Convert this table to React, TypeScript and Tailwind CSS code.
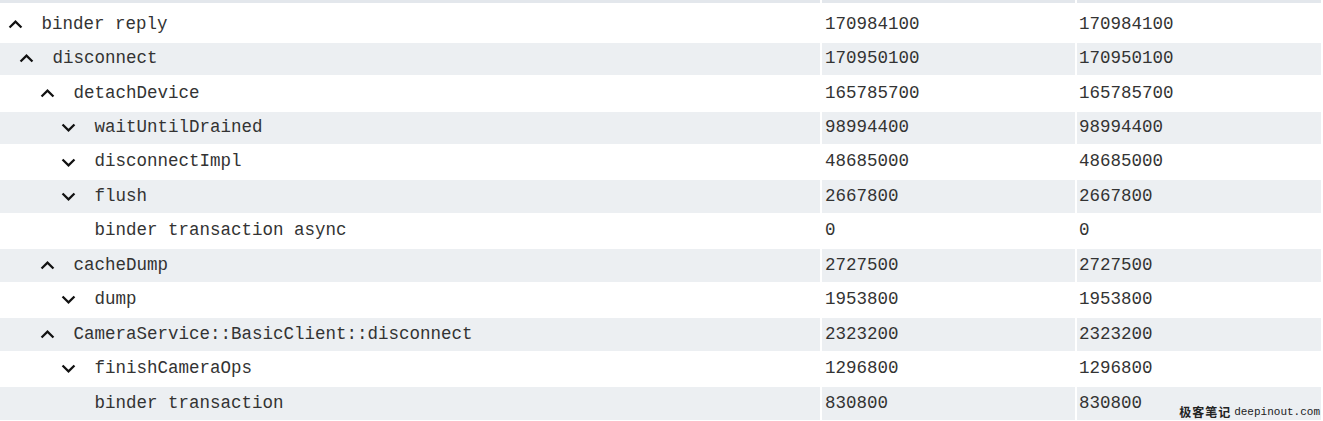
import React from "react";

type Row = {
    name: string;
    level: number;
    chevron: "up" | "down" | "none";
    wall: string;
    self: string;
};

const rows: Row[] = [
    { name: "binder reply", level: 0, chevron: "up", wall: "170984100", self: "170984100" },
    { name: "disconnect", level: 1, chevron: "up", wall: "170950100", self: "170950100" },
    { name: "detachDevice", level: 2, chevron: "up", wall: "165785700", self: "165785700" },
    { name: "waitUntilDrained", level: 3, chevron: "down", wall: "98994400", self: "98994400" },
    { name: "disconnectImpl", level: 3, chevron: "down", wall: "48685000", self: "48685000" },
    { name: "flush", level: 3, chevron: "down", wall: "2667800", self: "2667800" },
    { name: "binder transaction async", level: 3, chevron: "none", wall: "0", self: "0" },
    { name: "cacheDump", level: 2, chevron: "up", wall: "2727500", self: "2727500" },
    { name: "dump", level: 3, chevron: "down", wall: "1953800", self: "1953800" },
    { name: "CameraService::BasicClient::disconnect", level: 2, chevron: "up", wall: "2323200", self: "2323200" },
    { name: "finishCameraOps", level: 3, chevron: "down", wall: "1296800", self: "1296800" },
    { name: "binder transaction", level: 3, chevron: "none", wall: "830800", self: "830800" },
];

// left offset of the icon box for each depth
const indent = ["pl-[1.5px]", "pl-[12.5px]", "pl-[33.5px]", "pl-[54.5px]"];

function Chevron({ dir }: { dir: "up" | "down" | "none" }) {
    if (dir === "none") return <span className="w-[27px] h-[27px] shrink-0" />;
    return (
        <svg viewBox="0 0 24 24" className="w-[27px] h-[27px] shrink-0" fill="#111">
            {dir === "up" ? (
                <path d="M12 8l-6 6 1.41 1.41L12 10.83l4.59 4.58L18 14z" />
            ) : (
                <path d="M16.59 8.59L12 13.17 7.41 8.59 6 10l6 6 6-6z" />
            )}
        </svg>
    );
}

export default function App() {
    return (
        <div
            className="relative w-[1323px] h-[421px] overflow-hidden bg-white text-[#333] text-[17.5px]"
            style={{ fontFamily: '"Liberation Mono", "DejaVu Sans Mono", monospace' }}
        >
            <div className="grid grid-cols-[820px_253px_244px] gap-x-[2px] h-[3px]">
                <div className="bg-[#e3e7ec]" />
                <div className="bg-[#e3e7ec]" />
                <div className="bg-[#e3e7ec]" />
            </div>
            <div className="mt-[5.25px] grid grid-cols-[820px_253px_244px] gap-x-[2px] gap-y-[2px]">
                {rows.map((r, i) => {
                    const bg = i % 2 === 1 ? "bg-[#eceff2]" : "bg-white";
                    return (
                        <React.Fragment key={i}>
                            <div className={`${bg} h-[32.45px] flex items-center ${indent[r.level]}`}>
                                <Chevron dir={r.chevron} />
                                <span className="ml-[13px] whitespace-nowrap leading-none">{r.name}</span>
                            </div>
                            <div className={`${bg} h-[32.45px] flex items-center pl-[3px]`}>
                                <span className="leading-none">{r.wall}</span>
                            </div>
                            <div className={`${bg} h-[32.45px] flex items-center pl-[2px]`}>
                                <span className="leading-none">{r.self}</span>
                            </div>
                        </React.Fragment>
                    );
                })}
            </div>
            <div className="absolute right-[3px] bottom-[3px] flex items-end gap-[3px] text-[#222]">
                <span
                    className="text-[12px] font-bold leading-none tracking-[1px]"
                    style={{ fontFamily: '"Noto Sans CJK SC", sans-serif' }}
                >
                    极客笔记
                </span>
                <span className="text-[11px] leading-none">deepinout.com</span>
            </div>
        </div>
    );
}
